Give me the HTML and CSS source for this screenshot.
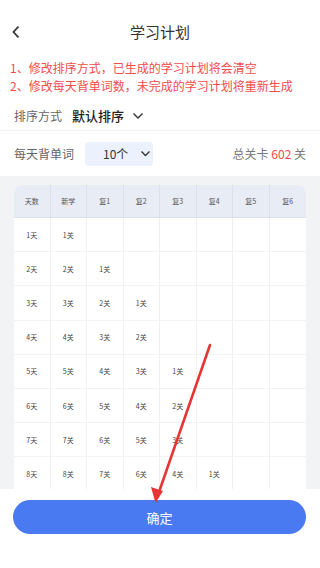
FILE: index.html
```html
<!DOCTYPE html>
<html lang="zh-CN">
<head>
<meta charset="utf-8">
<link rel="stylesheet" href="styles.css">
</head>
<body>
<div class="page">
  <header class="topbar">
    <svg class="back" width="10" height="14" viewBox="0 0 10 14"><path d="M7.5 1.5 L2.5 7 L7.5 12.5" fill="none" stroke="#333" stroke-width="1.8"/></svg>
    <div class="title">学习计划</div>
  </header>
  <div class="notes">
    <p>1、修改排序方式，已生成的学习计划将会清空</p>
    <p>2、修改每天背单词数，未完成的学习计划将重新生成</p>
  </div>
  <div class="sort-row">
    <span class="label">排序方式</span>
    <span class="sort-value">默认排序</span>
    <svg class="chev" width="12" height="8" viewBox="0 0 12 8"><path d="M1.5 1.5 L6 6 L10.5 1.5" fill="none" stroke="#333" stroke-width="1.4"/></svg>
  </div>
  <div class="daily-row">
    <span class="label">每天背单词</span>
    <div class="pill">
      <span>10个</span>
      <svg width="11" height="7" viewBox="0 0 11 7"><path d="M1.5 1.5 L5.5 5.5 L9.5 1.5" fill="none" stroke="#333" stroke-width="1.3"/></svg>
    </div>
    <span class="total">总关卡 <em>602</em> 关</span>
  </div>
  <div class="table-area">
    <div class="grid">
      <div class="row head"><div>天数</div><div>新学</div><div>复1</div><div>复2</div><div>复3</div><div>复4</div><div>复5</div><div>复6</div></div>
      <div class="row"><div>1天</div><div>1关</div><div></div><div></div><div></div><div></div><div></div><div></div></div>
      <div class="row"><div>2天</div><div>2关</div><div>1关</div><div></div><div></div><div></div><div></div><div></div></div>
      <div class="row"><div>3天</div><div>3关</div><div>2关</div><div>1关</div><div></div><div></div><div></div><div></div></div>
      <div class="row"><div>4天</div><div>4关</div><div>3关</div><div>2关</div><div></div><div></div><div></div><div></div></div>
      <div class="row"><div>5天</div><div>5关</div><div>4关</div><div>3关</div><div>1关</div><div></div><div></div><div></div></div>
      <div class="row"><div>6天</div><div>6关</div><div>5关</div><div>4关</div><div>2关</div><div></div><div></div><div></div></div>
      <div class="row"><div>7天</div><div>7关</div><div>6关</div><div>5关</div><div>3关</div><div></div><div></div><div></div></div>
      <div class="row last"><div>8天</div><div>8关</div><div>7关</div><div>6关</div><div>4关</div><div>1关</div><div></div><div></div></div>
    </div>
  </div>
  <div class="footer">
    <button class="confirm">确定</button>
  </div>
  <svg class="annot" width="320" height="568" viewBox="0 0 320 568">
    <line x1="210" y1="345" x2="159" y2="492" stroke="#e53535" stroke-width="2.6" stroke-linecap="round"/>
    <polygon points="155.5,503 151,487 163,491" fill="#e53535"/>
  </svg>
</div>
</body>
</html>
```
FILE: styles.css
```css
* { box-sizing: border-box; margin: 0; padding: 0; }
html, body { width: 320px; height: 568px; overflow: hidden; }
body {
  background: #fff;
  font-family: "Noto Sans CJK SC", "Noto Sans", Roboto, sans-serif;
  color: #333;
}
.page {
  position: relative;
  width: 320px;
  height: 568px;
  display: flex;
  flex-direction: column;
}
.topbar {
  position: relative;
  height: 52px;
  display: flex;
  align-items: center;
  justify-content: center;
  padding-top: 12px;
}
.back { position: absolute; left: 11px; top: 25px; }
.title { font-size: 15px; line-height: 20px; color: #333; }
.notes { padding: 0 0 0 10px; margin-top: 7px; }
.notes p { font-size: 12px; line-height: 18px; color: #f34c4c; white-space: nowrap; }
.sort-row {
  height: 30px;
  margin-top: 6px;
  display: flex;
  align-items: center;
  padding-left: 14px;
  border-bottom: 1px solid #f2f2f2;
}
.label { font-size: 12px; color: #666; }
.sort-value { font-size: 13px; color: #222; font-weight: 500; margin-left: 10px; }
.chev { margin-left: 8px; }
.daily-row {
  height: 45px;
  display: flex;
  align-items: center;
  padding: 0 14px;
}
.pill {
  width: 68px;
  height: 24px;
  margin-left: 11px;
  border-radius: 4px;
  background: #ebf1fd;
  display: flex;
  align-items: center;
  padding-left: 18px;
  gap: 12px;
  font-size: 12px;
  color: #333;
}
.total { margin-left: auto; font-size: 12px; color: #777; }
.total em { font-style: normal; color: #f34c4c; }
.table-area {
  height: 313px;
  background: #f2f3f5;
  padding: 9px 14px 0 14px;
  overflow: hidden;
}
.grid {
  background: #fff;
  border-radius: 8px 8px 0 0;
  overflow: hidden;
}
.row {
  display: grid;
  grid-template-columns: repeat(8, 1fr);
  height: 34.2px;
  border-bottom: 1.5px solid #f3f3f3;
}
.row.last { border-bottom: none; height: 34px; }
.row > div {
  display: flex;
  align-items: center;
  justify-content: center;
  font-size: 7px;
  color: #444;
  border-right: 1px solid #f0f0f0;
}
.row > div:last-child { border-right: none; }
.row.head { background: #e7ecf5; height: 33px; border-bottom: 1px solid #dde3ee; }
.row.head > div { color: #555; border-right-color: #dbe1ec; }
.footer {
  flex: 1;
  padding: 11px 14px 0 13px;
}
.confirm {
  width: 293px;
  height: 34px;
  border: none;
  border-radius: 17px;
  background: #4a7af2;
  color: #fff;
  font-family: "Noto Sans CJK SC", sans-serif;
  font-size: 13px;
}
.annot { position: absolute; left: 0; top: 0; pointer-events: none; }
```
